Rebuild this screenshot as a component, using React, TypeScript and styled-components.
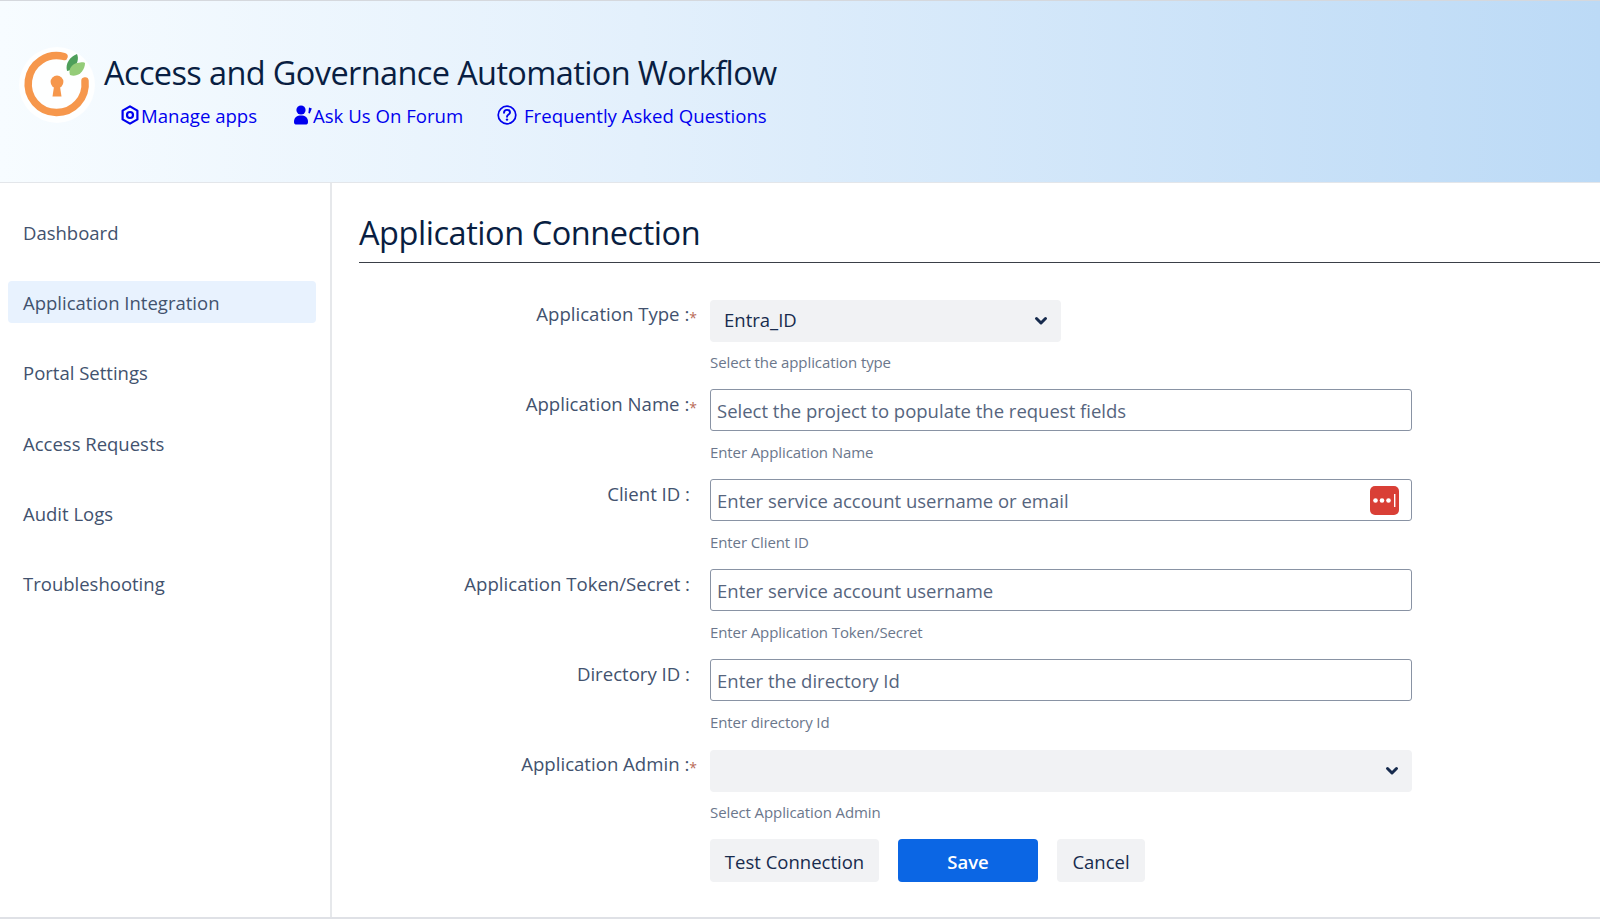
import React from "react";
import styled, { createGlobalStyle } from "styled-components";

const Global = createGlobalStyle`
  html, body { margin: 0; padding: 0; background: #fff; }
  body { font-family: "Open Sans", "Noto Sans", sans-serif; color: #172b4d; }
  * { box-sizing: border-box; }
`;

const Page = styled.div`
  width: 1600px; height: 919px; overflow: hidden; display: flex; flex-direction: column;
  border-bottom: 2px solid #dfe1e6;
`;
const Header = styled.header`
  height: 183px; flex: none; display: flex; align-items: flex-start; padding: 44px 0 0 12px;
  background: linear-gradient(90deg, #f7fcff 0%, #e3f0fc 40%, #bcdaf6 100%);
  border-top: 1px solid #d5d8dd; border-bottom: 1px solid #e3e6ea;
`;
const HeaderText = styled.div`
  display: flex; flex-direction: column; margin-left: 0; padding-top: 6px;
`;
const AppTitle = styled.h1`
  margin: 0; font-size: 32.5px; line-height: 44px; font-weight: 400; color: #091e42; letter-spacing: -0.62px;
`;
const Links = styled.nav`
  display: flex; margin: 5px 0 0 17px; height: 30px; align-items: center;
`;
const HeaderLink = styled.a<{ $w: number; $gap?: number }>`
  display: flex; align-items: center; width: ${p => p.$w}px; gap: ${p => p.$gap ?? 2}px;
  color: #0000ee; font-size: 18.6px; white-space: nowrap;
  svg { flex: none; }
`;
const Body = styled.div`
  flex: 1; display: flex; min-height: 0;
`;
const Sidebar = styled.aside`
  width: 332px; flex: none; border-right: 2px solid #e6e8eb; padding: 28px 14px 0 8px;
  display: flex; flex-direction: column; gap: 28.4px;
`;
const NavItem = styled.div<{ $active?: boolean }>`
  height: 42px; border-radius: 4px; padding-left: 15px; display: flex; align-items: center;
  font-size: 18.5px; color: #42526e; background: ${p => (p.$active ? "#e8f2fe" : "transparent")};
`;
const Main = styled.main`
  flex: 1; padding: 25px 0 0 27px; min-width: 0;
`;
const PageTitle = styled.h2`
  margin: 0; height: 55px; font-size: 32.5px; line-height: 50px; font-weight: 400; color: #091e42;
  letter-spacing: -0.45px; border-bottom: 1.5px solid #3a3f47;
`;
const Form = styled.form`
  margin-top: 37px; display: flex; flex-direction: column;
`;
const Row = styled.div`
  height: 90px; display: grid; grid-template-columns: 338px 702px; column-gap: 13px;
`;
const Label = styled.label<{ $required?: boolean }>`
  text-align: right; font-size: 18.6px; line-height: 28px; color: #42526e; white-space: nowrap;
  padding-right: ${p => (p.$required ? 0 : 7)}px;
`;
const Star = styled.span`
  color: #b86a58; font-size: 14px; position: relative; top: 2px;
`;
const Field = styled.div`
  display: flex; flex-direction: column;
`;
const ControlWrap = styled.div`
  position: relative; height: 42px;
`;
const TextInput = styled.input`
  display: block; width: 100%; height: 42px; margin-top: -1px; border: 1px solid #8993a4; border-radius: 3px; background: #fff;
  padding: 0 6px; font: 400 18.5px "Open Sans", "Noto Sans", sans-serif; color: #172b4d; outline: none;
  &::placeholder { color: #56657e; opacity: 1; }
`;
const SelectBox = styled.select<{ $w?: number }>`
  appearance: none; width: ${p => (p.$w ? `${p.$w}px` : "100%")}; height: 42px; border: none; border-radius: 4px;
  background: #f1f2f4; padding: 0 14px 3px; font: 400 18.5px "Open Sans", "Noto Sans", sans-serif; color: #172b4d;
`;
const Chevron = styled.svg<{ $right: number }>`
  position: absolute; top: 16px; right: ${p => p.$right}px; width: 14px; height: 10px;
`;
const Keeper = styled.div`
  position: absolute; top: 6px; right: 13px; width: 29px; height: 29px; border-radius: 5px;
  background: #d93f36; display: flex; align-items: center; justify-content: center;
`;
const Help = styled.div`
  margin-top: 10px; font-size: 15px; line-height: 21px; color: #6b778c; letter-spacing: -0.1px;
`;
const Actions = styled.div`
  margin: -1px 0 0 351px; display: flex;
`;
const Btn = styled.button<{ $w: number; $primary?: boolean; $mr?: number }>`
  width: ${p => p.$w}px; height: 43px; margin-right: ${p => p.$mr ?? 0}px; border: none; border-radius: 4px;
  font: ${p => (p.$primary ? 600 : 400)} 18.5px "Open Sans", "Noto Sans", sans-serif;
  background: ${p => (p.$primary ? "#0b66e4" : "#f1f2f4")}; color: ${p => (p.$primary ? "#fff" : "#172b4d")};
  padding: 1px 0 0;
`;

const Logo = () => (
  <svg width="92" height="84" viewBox="0 0 92 84">
    <circle cx="45" cy="40" r="38" fill="#fff" opacity="0.85" />
    <path d="M52 11.5 A28.5 28.5 0 1 0 73 36" fill="none" stroke="#f6974c" strokeWidth="7.5" strokeLinecap="round" />
    <circle cx="45" cy="37" r="6.4" fill="#f6974c" />
    <path d="M42.4 39 L47.6 39 L49.5 51.5 L40.5 51.5 Z" fill="#f6974c" />
    <path d="M55 26 C53 18 58 12 65 9 C67 13 66 20 59 25 Z" fill="#4e9f5a" />
    <path d="M58 30 C56 24 60 19 65 18 C70 17 72 17 73 18 C73 25 67 33 58 30 Z" fill="#94cc78" />
  </svg>
);

const HexIcon = () => (
  <svg width="18" height="20" viewBox="0 0 18 20" fill="none" stroke="#0000ee" strokeWidth="2.2">
    <path d="M9 1.4 L16.4 5.6 V14.4 L9 18.6 L1.6 14.4 V5.6 Z" strokeLinejoin="round" />
    <circle cx="9" cy="10" r="3" />
  </svg>
);
const PersonIcon = () => (
  <svg width="19" height="20" viewBox="0 0 19 20" fill="#0000ee">
    <circle cx="7" cy="5" r="4.6" />
    <path d="M0 17 C0 12 3 10.5 7 10.5 C11 10.5 14 12 14 17 C14 19 13 19.5 11.5 19.5 H2.5 C1 19.5 0 19 0 17 Z" />
    <path d="M15 2.5 L17.8 3.4 L15.8 8.4 L14.4 8 Z" />
  </svg>
);
const QuestionIcon = () => (
  <svg width="20" height="20" viewBox="0 0 20 20" fill="none" stroke="#0000ee">
    <circle cx="10" cy="10" r="8.8" strokeWidth="1.7" />
    <path d="M7 7.8 C7 5.8 8.4 4.9 10 4.9 C11.8 4.9 13 6 13 7.4 C13 9.6 10 9.6 10 11.8" strokeWidth="1.9" strokeLinecap="round" />
    <circle cx="10" cy="14.6" r="1.2" fill="#0000ee" stroke="none" />
  </svg>
);
const ChevronIcon = ({ right }: { right: number }) => (
  <Chevron $right={right} viewBox="0 0 14 10" fill="none" stroke="#172b4d" strokeWidth="3" strokeLinecap="round" strokeLinejoin="round">
    <path d="M2.5 2.5 L7 7 L11.5 2.5" />
  </Chevron>
);
const KeeperIcon = () => (
  <svg width="25" height="13" viewBox="0 0 25 13" fill="#fff">
    <circle cx="3.5" cy="6.5" r="2.3" />
    <circle cx="10" cy="6.5" r="2.3" />
    <circle cx="16.5" cy="6.5" r="2.3" />
    <rect x="22" y="0" width="1.4" height="13" />
  </svg>
);

const navItems = ["Dashboard", "Application Integration", "Portal Settings", "Access Requests", "Audit Logs", "Troubleshooting"];

export default function App() {
  return (
    <Page>
      <Global />
      <Header>
        <Logo />
        <HeaderText>
          <AppTitle>Access and Governance Automation Workflow</AppTitle>
          <Links>
            <HeaderLink $w={173} $gap={2}><HexIcon />Manage apps</HeaderLink>
            <HeaderLink $w={203} $gap={0}><PersonIcon />Ask Us On Forum</HeaderLink>
            <HeaderLink $w={290} $gap={7}><QuestionIcon />Frequently Asked Questions</HeaderLink>
          </Links>
        </HeaderText>
      </Header>
      <Body>
        <Sidebar>
          {navItems.map(n => (
            <NavItem key={n} $active={n === "Application Integration"}>{n}</NavItem>
          ))}
        </Sidebar>
        <Main>
          <PageTitle>Application Connection</PageTitle>
          <Form>
            <Row>
              <Label $required>Application Type :<Star>*</Star></Label>
              <Field>
                <ControlWrap>
                  <SelectBox $w={351} defaultValue="Entra_ID"><option>Entra_ID</option></SelectBox>
                  <ChevronIcon right={364} />
                </ControlWrap>
                <Help>Select the application type</Help>
              </Field>
            </Row>
            <Row>
              <Label $required>Application Name :<Star>*</Star></Label>
              <Field>
                <ControlWrap><TextInput placeholder="Select the project to populate the request fields" /></ControlWrap>
                <Help>Enter Application Name</Help>
              </Field>
            </Row>
            <Row>
              <Label>Client ID :</Label>
              <Field>
                <ControlWrap>
                  <TextInput placeholder="Enter service account username or email" />
                  <Keeper><KeeperIcon /></Keeper>
                </ControlWrap>
                <Help>Enter Client ID</Help>
              </Field>
            </Row>
            <Row>
              <Label>Application Token/Secret :</Label>
              <Field>
                <ControlWrap><TextInput placeholder="Enter service account username" /></ControlWrap>
                <Help>Enter Application Token/Secret</Help>
              </Field>
            </Row>
            <Row>
              <Label>Directory ID :</Label>
              <Field>
                <ControlWrap><TextInput placeholder="Enter the directory Id" /></ControlWrap>
                <Help>Enter directory Id</Help>
              </Field>
            </Row>
            <Row>
              <Label $required>Application Admin :<Star>*</Star></Label>
              <Field>
                <ControlWrap>
                  <SelectBox defaultValue=""><option></option></SelectBox>
                  <ChevronIcon right={13} />
                </ControlWrap>
                <Help>Select Application Admin</Help>
              </Field>
            </Row>
            <Actions>
              <Btn type="button" $w={169} $mr={19}>Test Connection</Btn>
              <Btn type="button" $w={140} $mr={19} $primary>Save</Btn>
              <Btn type="button" $w={88}>Cancel</Btn>
            </Actions>
          </Form>
        </Main>
      </Body>
    </Page>
  );
}
